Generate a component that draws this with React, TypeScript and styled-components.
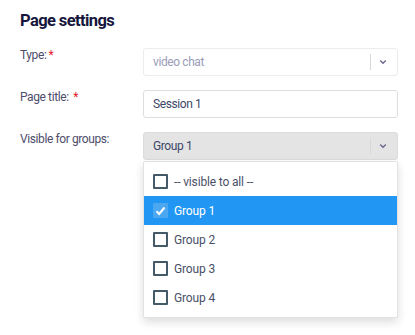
import React, { FC } from "react";
import styled, { createGlobalStyle } from "styled-components";

const GlobalStyle = createGlobalStyle`
  html, body {
    margin: 0;
    padding: 0;
    background: #ffffff;
  }
  body {
    font-family: Roboto, "Liberation Sans", sans-serif;
  }
`;

const groups = ["-- visible to all --", "Group 1", "Group 2", "Group 3", "Group 4"];
const selected = "Group 1";

const textSize = 12;
const tracking = -0.4;

const Page = styled.div`
  width: 415px;
  height: 335px;
  padding: 10px 17px 0 20px;
  box-sizing: border-box;
`;

const Heading = styled.h2`
  margin: 0 0 16px;
  font-family: Roboto, "Noto Sans", sans-serif;
  font-size: 16.5px;
  font-weight: 700;
  line-height: 22px;
  color: #16163d;
  letter-spacing: -0.6px;
`;

const Form = styled.div`
  display: grid;
  grid-template-columns: 123px 255px;
  row-gap: 14px;
`;

const Label = styled.label`
  font-size: ${textSize}px;
  letter-spacing: ${tracking}px;
  line-height: 15px;
  color: #4d4d6b;
`;

const Required = styled.span`
  color: #e0202a;
  margin-left: 2px;
`;

const Field = styled.div`
  position: relative;
`;

const Control = styled.div<{ $muted?: boolean; $filled?: boolean }>`
  height: 28px;
  box-sizing: border-box;
  display: flex;
  align-items: center;
  padding: 0 0 0 9px;
  border: 1px solid ${p => (p.$filled ? "#dcdcdc" : p.$muted ? "#ececf0" : "#dedede")};
  border-radius: 3px;
  background: ${p => (p.$filled ? "#e4e4e4" : "#ffffff")};
  font-size: ${textSize}px;
  letter-spacing: ${tracking}px;
  color: ${p => (p.$muted ? "#9c9cb8" : "#3e4868")};
`;

const Value = styled.span`
  flex: 1;
`;

const Indicator = styled.div`
  display: flex;
  align-items: center;
  height: 16px;
  border-left: 1px solid #d8d8dc;
  padding: 0 10px 0 8px;
  color: #6a6a90;
`;

const Menu = styled.div`
  position: absolute;
  left: 0;
  right: 0;
  top: 29px;
  padding: 5px 0 5px;
  background: #ffffff;
  border: 1px solid #e2e2e2;
  border-radius: 2px;
  box-shadow: 0 4px 10px rgba(0, 0, 0, 0.14);
  z-index: 2;
`;

const Option = styled.div<{ $active: boolean }>`
  height: 29px;
  display: flex;
  align-items: center;
  gap: 6px;
  padding-left: 9px;
  font-size: ${textSize}px;
  letter-spacing: -0.15px;
  color: ${p => (p.$active ? "#ffffff" : "#4a5068")};
  background: ${p => (p.$active ? "#2196f3" : "transparent")};
`;

const Box = styled.span<{ $checked: boolean }>`
  width: 15px;
  height: 15px;
  box-sizing: border-box;
  display: flex;
  align-items: center;
  justify-content: center;
  border: ${p => (p.$checked ? "none" : "2px solid #455a68")};
  border-radius: 1px;
  background: ${p => (p.$checked ? "#4ba7f0" : "#ffffff")};
`;

const Chevron: FC = () => (
  <svg width="8" height="6" viewBox="0 0 8 6">
    <path d="M1.2 1.5 L4 4.3 L6.8 1.5" fill="none" stroke="currentColor" strokeWidth="1.4" />
  </svg>
);

const Check: FC = () => (
  <svg width="11" height="10" viewBox="0 0 11 10">
    <path d="M1.5 5.2 L4.2 8 L9.5 1.5" fill="none" stroke="#ffffff" strokeWidth="2" />
  </svg>
);

export default function App() {
  return (
    <Page>
      <GlobalStyle />
      <Heading>Page settings</Heading>
      <Form>
        <Label>
          Type:<Required>*</Required>
        </Label>
        <Field>
          <Control $muted>
            <Value>video chat</Value>
            <Indicator>
              <Chevron />
            </Indicator>
          </Control>
        </Field>

        <Label>
          Page title: <Required>*</Required>
        </Label>
        <Field>
          <Control>
            <Value>Session 1</Value>
          </Control>
        </Field>

        <Label>Visible for groups:</Label>
        <Field>
          <Control $filled>
            <Value>Group 1</Value>
            <Indicator>
              <Chevron />
            </Indicator>
          </Control>
          <Menu>
            {groups.map(g => {
              const active = g === selected;
              return (
                <Option key={g} $active={active}>
                  <Box $checked={active}>{active && <Check />}</Box>
                  {g}
                </Option>
              );
            })}
          </Menu>
        </Field>
      </Form>
    </Page>
  );
}
